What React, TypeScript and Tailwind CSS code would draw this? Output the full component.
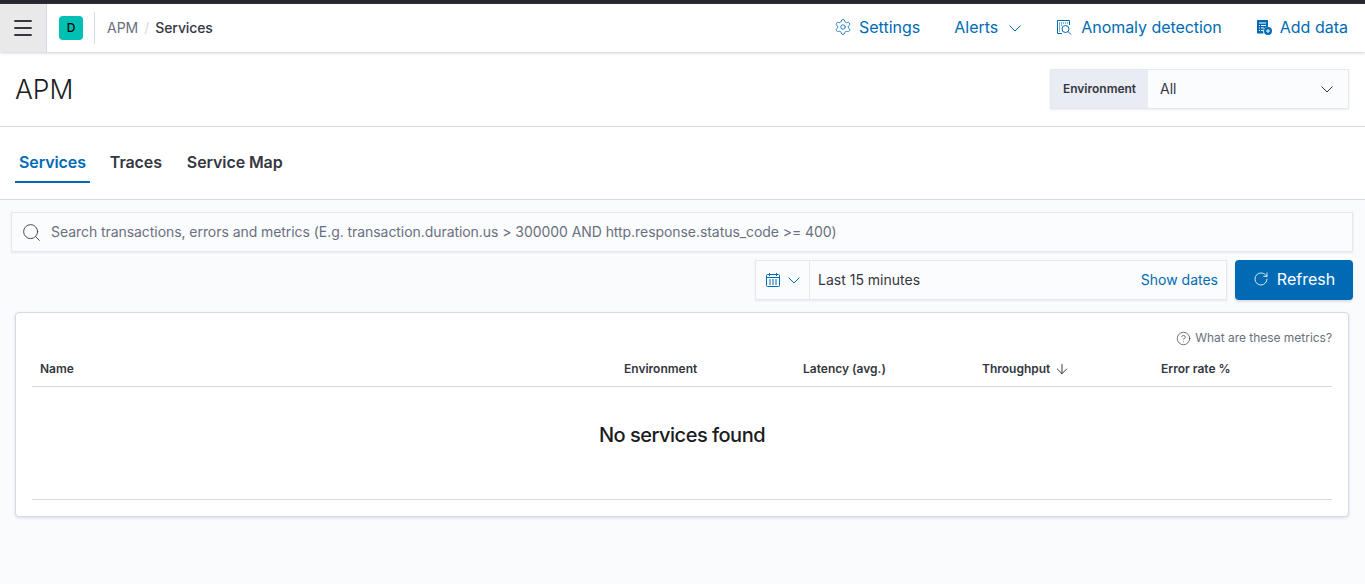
import { ArrowDown, CircleHelp, Menu, RotateCw, Search, Settings } from "lucide-react"

function Chevron({ className }: { className?: string }) {
    return (
        <svg width="16" height="16" viewBox="0 0 16 16" fill="none" stroke="currentColor" strokeWidth="1" className={className}>
            <path d="M2.500 5.500L8 11L13.500 5.500" />
        </svg>
    )
}

function AnomalyIcon() {
    return (
        <svg width="16" height="16" viewBox="0 0 16 16" fill="none" stroke="#006bb4" strokeWidth="1">
            <path d="M6 14.500H1.500V1.500H13.500V6" />
            <path d="M3 4h9M3 6h3M3 8h1M3 10h1M3 12h1" strokeDasharray="1 1" />
            <circle cx="9.500" cy="10" r="3.500" />
            <path d="M12 12.500L15 15.500" />
        </svg>
    )
}

function AddDataIcon() {
    return (
        <svg width="16" height="16" viewBox="0 0 16 16">
            <path d="M1 1h11v7a4.500 4.500 0 0 0-4.500 6.500H1z" fill="#006bb4" />
            <path d="M3 3.500h7v1H3zM3 6h1v1H3zM5 6h5v1H5zM3 8.500h1v1H3zM5 8.500h3v1H5zM3 11h1v1H3zM5 11h2v1H5z" fill="#fff" />
            <circle cx="12" cy="12" r="4" fill="#006bb4" />
            <path d="M11.500 10h1v1.500H14v1h-1.500V14h-1v-1.500H10v-1h1.500z" fill="#fff" />
        </svg>
    )
}

function CalendarIcon() {
    return (
        <svg width="16" height="16" viewBox="0 0 16 16" fill="none">
            <rect x="1.500" y="2.500" width="13" height="12" rx="1" stroke="#006bb4" />
            <path d="M4.500 1v3M11.500 1v3M1.500 5.500h13" stroke="#006bb4" />
            <path d="M4 7.500h2v1H4zM7 7.500h2v1H7zM10 7.500h2v1h-2zM4 9.500h2v1H4zM7 9.500h2v1H7zM10 9.500h2v1h-2zM4 11.500h2v1H4zM7 11.500h2v1H7zM10 11.500h2v1h-2z" fill="#006bb4" />
        </svg>
    )
}

export default function App() {
    return (
        <div className="h-[584px] overflow-hidden bg-[#fafbfd] font-['Inter',sans-serif] text-[#343741]">
            <div className="h-1 bg-[#25262e]"></div>

            <header className="relative flex h-12 items-center bg-white shadow-[0_1px_3px_rgba(152,162,179,0.5)]">
                <div className="flex h-full w-[47px] items-center justify-center border-r border-[#d3dae6] bg-[#e9e9ea]">
                    <Menu size={24} strokeWidth={1.9} />
                </div>
                <div className="ml-3 flex h-6 w-6 items-center justify-center rounded bg-[#00bfb3] text-xs font-medium text-black">D</div>
                <div className="ml-[11px] h-8 w-px bg-[#d3dae6]"></div>
                <div className="ml-3 flex items-center text-sm">
                    <span className="text-[#69707d]">APM</span>
                    <span className="mx-[6px] text-[#d3dae6]">/</span>
                    <span className="font-medium tracking-[-0.1px] text-[#343741]">Services</span>
                </div>
                <nav className="ml-auto mr-[17px] flex items-center pb-[2px] text-base text-[#006bb4]">
                    <span className="flex items-center gap-[7px]"><Settings size={18} strokeWidth={1.1} />Settings</span>
                    <span className="ml-[34px] flex items-center gap-2">Alerts<Chevron className="ml-[1px] mt-[2px]" /></span>
                    <span className="ml-[33px] flex items-center gap-[9px]"><AnomalyIcon /><span className="tracking-[-0.05px]">Anomaly detection</span></span>
                    <span className="ml-[34px] flex items-center gap-2"><AddDataIcon />Add data</span>
                </nav>
            </header>

            <div className="flex h-[75px] items-center justify-between border-b border-[#d3dae6] bg-white pl-[15px] pr-4">
                <h1 className="pt-[2px] text-[26.500px] font-light text-[#1a1c21]">APM</h1>
                <div className="flex h-10 w-[299px] border border-[#e4e8f0] bg-[#fbfcfd] shadow-[0_1px_2px_rgba(152,162,179,0.2)]">
                    <div className="flex w-[97px] items-center justify-center bg-[#e9edf3] text-xs font-semibold">Environment</div>
                    <div className="flex flex-1 items-center justify-between pl-3 pr-[13px] text-sm text-[#343741]">
                        All
                        <Chevron />
                    </div>
                </div>
            </div>

            <div className="flex h-[73px] items-start gap-4 border-b border-[#d3dae6] bg-white pl-[15px] pt-[18px] text-base font-semibold tracking-[-0.1px]">
                <div className="flex h-[38px] items-center border-b-2 border-[#006bb4] px-1 pb-[2px] text-[#006bb4]">Services</div>
                <div className="flex h-[38px] items-center px-1 pb-[4px]">Traces</div>
                <div className="ml-[1px] flex h-[38px] items-center px-1 pb-[4px]">Service Map</div>
            </div>

            <div className="px-3 pt-3">
                <div className="-ml-px flex h-10 items-center gap-[9px] border border-[#e4e8f0] bg-[#fbfcfd] pl-[9px] text-sm tracking-[-0.06px] text-[#69707d] shadow-[0_1px_2px_rgba(152,162,179,0.2)]">
                    <Search size={21} strokeWidth={1} className="text-[#343741]" />
                    Search transactions, errors and metrics (E.g. transaction.duration.us &gt; 300000 AND http.response.status_code &gt;= 400)
                </div>

                <div className="mt-2 flex justify-end gap-2">
                    <div className="flex h-10 w-[472px] items-center border border-[#e4e8f0] bg-[#fbfcfd] text-sm shadow-[0_1px_2px_rgba(152,162,179,0.2)]">
                        <div className="flex h-full w-[54px] items-center gap-[5px] border-r border-[#e4e8f0] pl-[9px]">
                            <CalendarIcon />
                            <Chevron className="text-[#006bb4]" />
                        </div>
                        <span className="ml-2">Last 15 minutes</span>
                        <span className="ml-auto mr-2 text-[#006bb4]">Show dates</span>
                    </div>
                    <div className="flex h-10 w-[118px] items-center justify-center gap-2 rounded bg-[#006bb4] pb-[2px] text-base text-white shadow-[0_2px_2px_rgba(152,162,179,0.3)]">
                        <RotateCw size={16} strokeWidth={1.25} />
                        Refresh
                    </div>
                </div>

                <div className="mr-[4px] ml-[3px] mt-3 h-[205px] rounded border border-[#d3dae6] bg-white px-4 pt-[17px] shadow-[0_1px_3px_rgba(152,162,179,0.35)]">
                    <div className="flex items-center justify-end gap-[4px] text-xs tracking-[-0.03px] text-[#69707d]">
                        <CircleHelp size={15} strokeWidth={1.1} className="text-[#343741]" />
                        What are these metrics?
                    </div>
                    <div className="mt-[15px] grid h-[26px] grid-cols-[584px_repeat(4,179px)] items-start border-b border-[#d3dae6] text-xs font-semibold">
                        <span className="px-2">Name</span>
                        <span className="px-2">Environment</span>
                        <span className="px-2">Latency (avg.)</span>
                        <span className="flex items-center gap-[4px] px-2">Throughput<ArrowDown size={16} strokeWidth={1.25} className="text-[#1a1c21]" /></span>
                        <span className="px-2">Error rate %</span>
                    </div>
                    <div className="flex h-[113px] items-start justify-center border-b border-[#d3dae6] pt-[36px] text-xl font-medium leading-6 tracking-[-0.5px] text-[#1a1c21]">
                        No services found
                    </div>
                </div>
            </div>
        </div>
    )
}
